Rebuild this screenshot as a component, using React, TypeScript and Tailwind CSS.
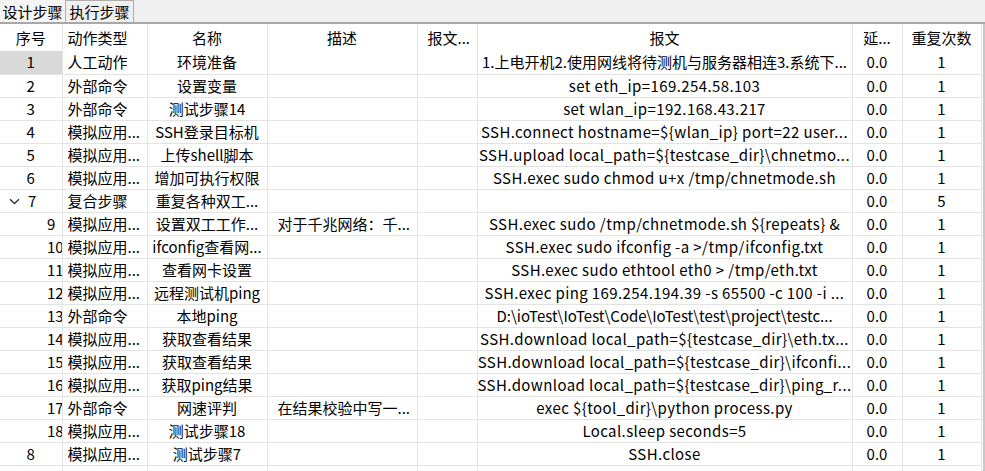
import React from 'react';

type Row = {
    no: string;
    child?: boolean;
    group?: boolean;
    type: string;
    name: string;
    desc?: string;
    msg: string;
    wide?: boolean;
    delay: string;
    repeat: string;
    selected?: boolean;
};

const rows: Row[] = [
    { no: '1', type: '人工动作', name: '环境准备', msg: '1.上电开机2.使用网线将待测机与服务器相连3.系统下...', delay: '0.0', repeat: '1', selected: true },
    { no: '2', type: '外部命令', name: '设置变量', msg: 'set eth_ip=169.254.58.103', wide: true, delay: '0.0', repeat: '1' },
    { no: '3', type: '外部命令', name: '测试步骤14', msg: 'set wlan_ip=192.168.43.217', wide: true, delay: '0.0', repeat: '1' },
    { no: '4', type: '模拟应用...', name: 'SSH登录目标机', msg: 'SSH.connect hostname=${wlan_ip} port=22 user...', wide: true, delay: '0.0', repeat: '1' },
    { no: '5', type: '模拟应用...', name: '上传shell脚本', msg: 'SSH.upload local_path=${testcase_dir}\\chnetmo...', wide: true, delay: '0.0', repeat: '1' },
    { no: '6', type: '模拟应用...', name: '增加可执行权限', msg: 'SSH.exec sudo chmod u+x /tmp/chnetmode.sh', wide: true, delay: '0.0', repeat: '1' },
    { no: '7', group: true, type: '复合步骤', name: '重复各种双工...', msg: '', delay: '0.0', repeat: '5' },
    { no: '9', child: true, type: '模拟应用...', name: '设置双工工作...', desc: '对于千兆网络：千...', msg: 'SSH.exec sudo /tmp/chnetmode.sh ${repeats} &', wide: true, delay: '0.0', repeat: '1' },
    { no: '10', child: true, type: '模拟应用...', name: 'ifconfig查看网...', msg: 'SSH.exec sudo ifconfig -a >/tmp/ifconfig.txt', wide: true, delay: '0.0', repeat: '1' },
    { no: '11', child: true, type: '模拟应用...', name: '查看网卡设置', msg: 'SSH.exec sudo ethtool eth0 > /tmp/eth.txt', wide: true, delay: '0.0', repeat: '1' },
    { no: '12', child: true, type: '模拟应用...', name: '远程测试机ping', msg: 'SSH.exec ping 169.254.194.39 -s 65500 -c 100 -i ...', wide: true, delay: '0.0', repeat: '1' },
    { no: '13', child: true, type: '外部命令', name: '本地ping', msg: 'D:\\ioTest\\IoTest\\Code\\IoTest\\test\\project\\testc...', delay: '0.0', repeat: '1' },
    { no: '14', child: true, type: '模拟应用...', name: '获取查看结果', msg: 'SSH.download local_path=${testcase_dir}\\eth.tx...', wide: true, delay: '0.0', repeat: '1' },
    { no: '15', child: true, type: '模拟应用...', name: '获取查看结果', msg: 'SSH.download local_path=${testcase_dir}\\ifconfi...', wide: true, delay: '0.0', repeat: '1' },
    { no: '16', child: true, type: '模拟应用...', name: '获取ping结果', msg: 'SSH.download local_path=${testcase_dir}\\ping_r...', wide: true, delay: '0.0', repeat: '1' },
    { no: '17', child: true, type: '外部命令', name: '网速评判', desc: '在结果校验中写一...', msg: 'exec ${tool_dir}\\python process.py', wide: true, delay: '0.0', repeat: '1' },
    { no: '18', child: true, type: '模拟应用...', name: '测试步骤18', msg: 'Local.sleep seconds=5', wide: true, delay: '0.0', repeat: '1' },
    { no: '8', type: '模拟应用...', name: '测试步骤7', msg: 'SSH.close', wide: true, delay: '0.0', repeat: '1' },
];

const cell = 'border-r border-b border-[#e3e3e3] overflow-hidden whitespace-nowrap p-0 h-[23px] leading-[22px]';

function Chevron() {
    return (
        <svg width="11" height="7" viewBox="0 0 11 7" className="inline-block mr-[8px] mb-[2px]">
            <path d="M1 1.2 L5.5 5.6 L10 1.2" fill="none" stroke="#333" strokeWidth="1.4" />
        </svg>
    );
}

export default function App() {
    return (
        <div className="w-[985px] h-[471px] overflow-hidden bg-white text-black text-[15px]" style={{ fontFamily: '"Noto Sans CJK SC", "Noto Sans", sans-serif' }}>
            <div className="h-[24px] bg-[#f0f0f0] border-b-2 border-[#a8a8a8] flex items-end">
                <div className="h-[22px] w-[66px] border-r border-[#adadad] bg-[#f5f5f5] flex items-center justify-center leading-none">设计步骤</div>
                <div className="h-[22px] w-[68px] border-r border-t border-[#adadad] flex items-center justify-center leading-none">执行步骤</div>
            </div>
            <div className="flex h-[447px]">
                <table className="table-fixed border-collapse w-[981px]">
                    <colgroup>
                        <col className="w-[62px]" />
                        <col className="w-[85px]" />
                        <col className="w-[120px]" />
                        <col className="w-[150px]" />
                        <col className="w-[60px]" />
                        <col className="w-[375px]" />
                        <col className="w-[50px]" />
                        <col className="w-[79px]" />
                    </colgroup>
                    <thead>
                        <tr className="h-[27px]">
                            {['序号', '动作类型', '名称', '描述', '报文...', '报文', '延...', '重复次数'].map((h, i) => (
                                <th key={i} className={`font-normal border-r border-[#e3e3e3] p-0 leading-[27px] whitespace-nowrap overflow-hidden ${i === 4 ? 'text-left pl-[10px]' : 'text-center'} ${i === 1 ? 'text-left pl-[5px]' : ''}`}>
                                    {h}
                                </th>
                            ))}
                        </tr>
                    </thead>
                    <tbody>
                        {rows.map((r) => (
                            <tr key={r.no} className="h-[23px]">
                                <td className={`${cell} ${r.selected ? 'bg-[#d9d9d9]' : ''} ${r.child ? 'text-left pl-[47px] text-clip' : r.group ? 'text-left pl-[9px]' : 'text-center'}`}>
                                    {r.group && <Chevron />}
                                    {r.no}
                                </td>
                                <td className={`${cell} text-left pl-[5px]`}>{r.type}</td>
                                <td className={`${cell} text-center`}>{r.name}</td>
                                <td className={`${cell} text-left pl-[10px]`}>{r.desc ?? ''}</td>
                                <td className={cell}></td>
                                <td className={`${cell} text-center ${r.wide ? 'tracking-[0.4px]' : ''}`}>{r.msg}</td>
                                <td className={`${cell} text-center`}>{r.delay}</td>
                                <td className={`${cell} text-center`}>{r.repeat}</td>
                            </tr>
                        ))}
                        <tr className="h-[23px]">
                            {Array.from({ length: 8 }).map((_, i) => (
                                <td key={i} className={cell}></td>
                            ))}
                        </tr>
                    </tbody>
                </table>
                <div className="flex-1 border-r-2 border-[#c8c8c8]" />
            </div>
        </div>
    );
}
